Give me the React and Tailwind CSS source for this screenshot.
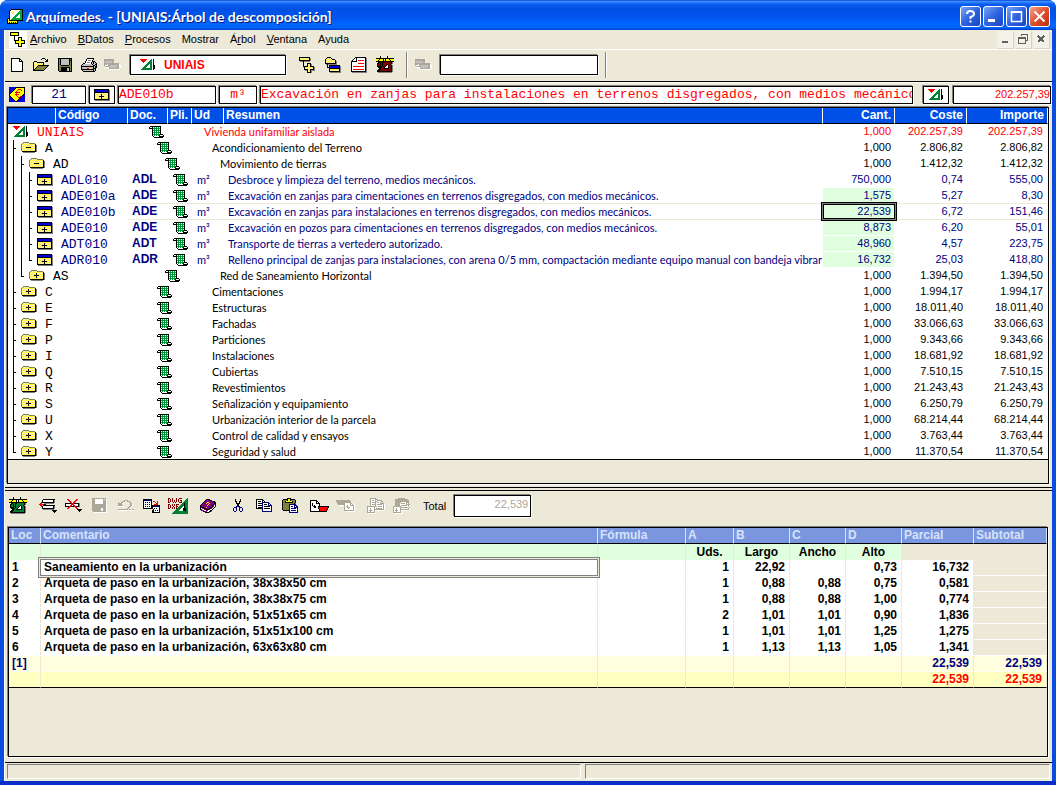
import React from "react";

const PALETTE = {
  k: "#000000",
  s: "#808080",
  w: "#ffffff",
  r: "#ff0000",
  g: "#008030",
  G: "#00a83c",
  b: "#0000e0",
  n: "#000080",
  Y: "#ffff00",
  d: "#aca899",
  m: "#800000",
  p: "#800080",
  o: "#808040",
  l: "#c0c0c0",
};

/* Icons are drawn on an even-sized box so that centring keeps them on whole pixels. */
function Pix({ map, even = true }) {
  const rects = [];
  map.forEach((row, y) => {
    for (let x = 0; x < row.length; x++) {
      const c = row[x];
      if (c === ".") continue;
      if (c === "y") {
        rects.push(<rect key={x + "-" + y} x={x} y={y} width="1" height="1" fill={(x + y) % 2 ? "#ffe83c" : "#fff8b8"} />);
        continue;
      }
      let e = x;
      while (e + 1 < row.length && row[e + 1] === c) e++;
      rects.push(<rect key={x + "-" + y} x={x} y={y} width={e - x + 1} height="1" fill={PALETTE[c]} />);
      x = e;
    }
  });
  const round = (n) => (even ? n + (n % 2) : n);
  const w = round(Math.max(...map.map((r) => r.length)));
  const h = round(map.length);
  return (
    <svg width={w} height={h} viewBox={`0 0 ${w} ${h}`} shapeRendering="crispEdges" aria-hidden="true" className="block shrink-0">
      {rects}
    </svg>
  );
}

const SHEET = [
  "kkkkkkkkkkkkkkk.",
  "kbbbbbbbbbbbbbks",
  "kbbbbbbbbbbbbbks",
  "kkkkkkkkkkkkkkks",
  "kyyyyyyyyyyyyyks",
  "kyyyyyykyyyyyyks",
  "kyyyyyykyyyyyyks",
  "kyyyykkkkkyyyyks",
  "kyyyyyykyyyyyyks",
  "kyyyyyykyyyyyyks",
  "kkkkkkkkkkkkkkks",
  ".sssssssssssssss",
];
const FOLDER_PLUS = [
  "..oooooo........",
  ".oyyyyyyoooooo..",
  "oyyyyyyyyyyyyyk.",
  "oyyyyyykyyyyyyks",
  "oyyyyyykyyyyyyks",
  "oyyyykkkkkyyyyks",
  "oyyyyyykyyyyyyks",
  "oyyyyyykyyyyyyks",
  "oyyyyyyyyyyyyyks",
  ".kkkkkkkkkkkkkks",
  "..ssssssssssss..",
];
const FOLDER_MINUS = FOLDER_PLUS.map((r, i) => (i === 3 || i === 4 || i === 6 || i === 7 ? "oyyyyyyyyyyyyyks" : r));
const SCROLL = [
  "...............",
  "...............",
  ".kkkkkkkkkkk...",
  "kwwkwGwGwGwk...",
  "kkkkGgGgGgGk...",
  "...kwGwGwGwk...",
  "...kGgGgGgGk...",
  "...kwGwGwGwk...",
  "...kGgGgGgGk...",
  "...kwGwGwGwk...",
  "...kGgGgGgGkkk.",
  "...kwGwGwGkwwwk",
  "....kwwwwwkkkkk",
  ".....kkkkkkkkk.",
];
const PROJECT = [
  "rrrrrrr....g.k.",
  ".rrrrr....gg.k.",
  "..rrr....ggg.k.",
  "...r....gggg.k.",
  ".......ggggg.k.",
  "......gggwgg.k.",
  ".....gggwwgg.kk",
  "....gggwwwgg.kk",
  "...gggwwwwgg.kk",
  "..gggggggggg.kk",
  ".ggggggggggg.k.",
];
const APP = [
  "....kkkkkkkkkkkk",
  "...kwwwwwwwwwGGk",
  "..kwwywwwwwwGGGk",
  "..kwyyyywwwGGGGk",
  "..kwwyywwwGGGGGk",
  "..kwwwwwwGGGwGGk",
  "..kwwwwwGGGwwGGk",
  "..kwwwwGGGwwwGGk",
  "..kwwwGGGwwwwGGk",
  ".kkwwGGGGGGGGGGk",
  "kYkwGGGGGGGGGGGk",
  "kYkkkkkkkkkkkkkk",
  "kYYYYYYYYYk.....",
  "kYkYkYkYkYk.....",
  "kkkkkkkkkkk.....",
];
const TREE_ADD = [
  "kkkkkkkkkkk.....",
  "kyyyyyyyyyks....",
  "kyyyyyyyyyks....",
  "kkkkkkkkkkks....",
  ".ssskssssss.....",
  "....k...........",
  "....k...kkkk....",
  "....k...kyyks...",
  "....k...kyyks...",
  "....kkkkkyykkkk.",
  ".....kyyyyyyyyks",
  ".....kyyyyyyyyks",
  ".....kkkkyykkkks",
  "......sskyykssss",
  "........kyyks...",
  "........kkkks...",
];
const MDI = [
  "kkkkkkkkk.......",
  "kYYYYYYYk.......",
  "kYYYYYYYk.......",
  "kkkkkkkkk.......",
  "....k...........",
  "....k...kkkk....",
  "....k...kYYk....",
  "....k...kYYk....",
  "....kkkkkYYkkkk.",
  ".....kYYYYYYYYk.",
  ".....kYYYYYYYYk.",
  ".....kkkkYYkkkk.",
  "........kYYk....",
  "........kYYk....",
  "........kkkk....",
];
const TREE_ITEM = [
  "..kkkk..........",
  ".kyyyyk.........",
  "kyyyyyykkk......",
  "kyyyyyyyyyk.....",
  "kyyyyyyyyyks....",
  "kyyyyyyyyyks....",
  "kkkkkkkkkkks....",
  ".sksssssssss....",
  "..k.kkkkkkkkkkk.",
  "..k.kbbbbbbbbbks",
  "..kkkbbbbbbbbbks",
  "....kkkkkkkkkkks",
  "....kyyyyyyyyyks",
  "....kyyyyyyyyyks",
  "....kkkkkkkkkkks",
  ".....sssssssssss",
];
const REPORT = [
  "....kkkkkkkkkkk.",
  "...kwkwwwwwwwwks",
  "..kwwkwwwwwwwwks",
  ".kwwwkwrrrrrrwks",
  "kkkkkkwwwwwwwwks",
  "kwwwwwwwwwwwwwks",
  "kwwwwwwrrrrrrwks",
  "kwwwwwwwwwwwwwks",
  "kwwwwwwwwwwwwwks",
  "kwrrrrrrrrrrrwks",
  "kwwwwwwwwwwwwwks",
  "kwwwwwwwwwwwwwks",
  "kwrrrrrrrrrrrwks",
  "kwwwwwwwwwwwwwks",
  "kkkkkkkkkkkkkkks",
  ".sssssssssssssss",
];
const measure = (c) => [
  "....k......k......",
  "....k......k......",
  "kkkkkkkkkkkkkkkkkk",
  "YYYkYYYkwkYYYkYYYY",
  "YYkYYYYkYkYYYYkYYY",
  "kkkkkkkkkkkkkkkkkk",
  "..kkcckkcccccccks.",
  ".kkckckccccccccks.",
  ".kcckckcccckccks.",
  ".kcckckccckwkccks.",
  ".kkkkckcckwwkccks.",
  "..kkkkcckwwwkccks.",
  "...kkcckkkkkkccks.",
  "..kkkccccccccccks.",
  ".kkkcccccccccccks.",
  ".kkkkkkkkkkkkkkks.",
  "..ssssssssssssss..",
].map((r) => r.replace(/c/g, c));
const MEASURE_RED = measure("m");
const MEASURE_GREEN = measure("g");
const NEW = [
  "kkkkkkkkk...",
  "kwwwwwwwkk..",
  "kwwwwwwwkwk.",
  "kwwwwwwwkkkk",
  "kwwwwwwwwwwk",
  "kwwwwwwwwwwk",
  "kwwwwwwwwwwk",
  "kwwwwwwwwwwk",
  "kwwwwwwwwwwk",
  "kwwwwwwwwwwk",
  "kwwwwwwwwwwk",
  "kwwwwwwwwwwk",
  "kwwwwwwwwwwk",
  "kkkkkkkkkkkk",
];
const OPEN = [
  ".........kkk....",
  "........k...k.k.",
  ".............kk.",
  ".kkk........kkk.",
  "kyyykkkkkkk.....",
  "kyyyyyyyyyk.....",
  "kyyyyyyyyyk.....",
  "kyyyykkkkkkkkkkk",
  "kyyykoooooooook.",
  "kyykoooooooook..",
  "kykoooooooook...",
  "kkoooooooook....",
  "kkkkkkkkkkk.....",
];
const SAVE = [
  "kkkkkkkkkkkkkk",
  "kokllllllllkok",
  "kokllllllllkkk",
  "kokllllllllkok",
  "kokllllllllkok",
  "kokllllllllkok",
  "kokllllllllkok",
  "kookkkkkkkkook",
  "kooooooooooook",
  "kookkkkkkkkkok",
  "kookkkkkkllkok",
  "kookkkkkkllkok",
  "kookkkkkkllkok",
  ".kkkkkkkkkkkkk",
];
const SAVE_OFF = [
  "dddddddddddddd.",
  "dddwwwwwwwwdwdw",
  "dddwwwwwwwwdddw",
  "dddwwwwwwwwdddw",
  "dddwwwwwwwwdddw",
  "dddwwwwwwwwdddw",
  "ddddddddddddddw",
  "ddddddddddddddw",
  "ddddddddddddddw",
  "ddddddddddddddw",
  "dddddddddwwdddw",
  "dddddddddwwdddw",
  "dddddddddwwdddw",
  ".dddddddddddddw",
  "..wwwwwwwwwwwww",
];
const PRINT = [
  "......kkkkkkk...",
  ".....kwwwwwwk...",
  ".....kwssswk....",
  "....kwwwwwwkkk..",
  "....kwssswklklk.",
  "..kkwwwwwwklkllk",
  ".klllllllllkllkk",
  "klllllllllllkklk",
  "kkkkkkkkkkkkklkk",
  "klllllllllllklkk",
  "klllllrrYYllkkk.",
  "kkkkkkkkkkkkklk.",
  ".kllllllllllklk.",
  "..kkkkkkkkkkkk..",
];
const LINKS_OFF = [
  "dddddddddd.......",
  "dddddddddd.......",
  "dllllllldd.......",
  "dlllllllddw......",
  "ddddddddddddddd..",
  "ddd.dddddddddddw.",
  "dwwwddlllllllddww",
  ".ddddllllllllddww",
  ".wwwwdllllllldd.w",
  "....wddddddddddw.",
  ".....wwwwwwwwwww.",
];
const EURO = [
  "bbbbbbbkkkkkkkkk",
  "bbbbbbkYYYYYYYYk",
  "bbbbbkYYYrrrYYwk",
  "bbbbkYYYrYYYrYYk",
  "bbbkYYYrYYYYYYYk",
  "bbkYYYrrrrrYYYYk",
  "bkYYYYYrYYYYYYYk",
  "kYYYYYrrrrYYYYkb",
  "kYYYYYYrYYYYYkbb",
  "bkYYYYYYrYYrkbbb",
  "bbkYYYYYYrrkbbbb",
  "bbbkYYYYYYkbbbbb",
  "bbbbkYYYYkbbbbbb",
  "bbbbbkYYkbbbbbbb",
  "bbbbbbkkbbbbbbbb",
];
const INSERT = [
  "....kkkkkkkkkkkk..",
  "...kwwwwwwwwwwks..",
  "...kwwwwwwwwwwks..",
  "..rkkkkkkkkkkkks..",
  ".rr..ssssssssss...",
  "rrrrrkk...........",
  ".rr.kkkkkkkkkkkk..",
  "..rkwwwwwwwwwwks..",
  "...kwwwwwwwwwwks..",
  "...kkkkkkkkkkkks..",
  "....sssssssssss...",
  ".............kkkkk",
  "..............kkk.",
  "...............k..",
];
const REMOVE = [
  "..rr.......rr....",
  "...rr.....rr.....",
  "....rr...rr......",
  ".....rr.rr.......",
  "kkkkkkrrrkkkkks..",
  "kwwwwwrrrwwwwks..",
  "kwwwwrrwrrwwwks..",
  "kkkkrrkkkrrkkks..",
  "...rr.....rr.....",
  "..rr.......rr....",
  "............kkkkk",
  ".............kkk.",
  "..............k..",
];
const UNDO_OFF = [
  "......dddd......",
  "....dddwwddd....",
  "d..ddw....wdd...",
  "ddddw......wdd..",
  "dddd........ddw.",
  "ddddd.......ddw.",
  ".wwwww.....ddw..",
  "..........ddw...",
  ".........ddw....",
  "dddddddddd.dd.dd",
  "wwwwwwwwwwwwwwww",
];
const CALC = [
  "kkkkkkkkk........",
  "knnnnnnnk........",
  "kwwwwwwwk.rr..r..",
  "kwkwkwkwk...r.r..",
  "kwwwwwwwk....rr..",
  "kwkwkwkwk..rrrr..",
  "kwwwwwwwkkkkkkkkk",
  "kwkwkwkwkknnnnnnk",
  "kwwwwwwwkkwwwwwwk",
  "kkkkkkkkkkwkwkwwk",
  "..........kwwwwwk",
  ".........kkwkwkwk",
  ".........kkwwwwwk",
  ".........kkkkkkkk",
];
const DXF = [
  "mm..m...m..mmm.....g",
  "m.m.m...m.m.......gg",
  "m.m.m.m.m.m.mm...ggg",
  "m.m.m.m.m.m..m..gggg",
  "mm...m.m...mmm.ggggg",
  "..............ggkggg",
  "mm..m.m.mmm..gggkggg",
  "m.m.m.m.m...ggggkggg",
  "m.m..m..mm.ggggwkggg",
  "m.m.m.m.m.ggggwwkggg",
  "mm..m.m.mggggwwkkkgg",
  "........ggggwwwkkkgg",
  ".......ggggwwwwkkkgg",
  "......gggggggggggggg",
  ".....ggggggggggggggg",
  "....gggggggggggggggg",
];
const BOOK = [
  "......kkkk......",
  ".....kppppkk....",
  "....kppppppppkk.",
  "...kpppYYpppppkk",
  "..kpppYppYppppkk",
  ".kppppppYppppkpk",
  "kppppppYppppkpwk",
  "kkppppppppppkpwk",
  "kpkkppYpppkkpwk.",
  "kwppkkpppkkpwk..",
  "kpwwppkkkpwwk...",
  ".kppwwppwwkk....",
  "...kkppwwkks....",
  ".....kkkks......",
];
const CUT = [
  "..k....k..",
  "..k....k..",
  "..kk..kk..",
  "...k..k...",
  "...kkkk...",
  "....kk....",
  "....kk....",
  "...nnnn...",
  ".nnn..nnn.",
  "n..n..n..n",
  "n..n..n..n",
  "n..n..n..n",
  ".nn....nn.",
];
const COPY = [
  "kkkkkkk.........",
  "kwwwwwkk........",
  "kwkkkwkwk.......",
  "kwwwwwnnnnnnn...",
  "kwkkkknwwwwwnn..",
  "kwwwwwnwkkkwnwn.",
  "kwkkkknwwwwwnnnn",
  "kwwwwwnwkkkkkkwn",
  "kwkkkknwwwwwwwwn",
  "kkkkkknwkkkkkkwn",
  "......nwwwwwwwwn",
  "......nwwwwwwwwn",
  "......nnnnnnnnnn",
];
const PASTE = [
  ".....kkkk.......",
  ".kkkkkYYkkkkk...",
  "kooookYYkooook..",
  "kookYYYYYYkook..",
  "kookkkkkkkkook..",
  "koooooooooooks..",
  "koooooonnnnnnn..",
  "koooooonwwwwnnn.",
  "koooooonwnnwnwnn",
  "koooooonwwwwnnnn",
  "koooooonwnnnnnwn",
  "koooooonwwwwwwwn",
  ".kkkkkknwnnnnnwn",
  ".......nwwwwwwwn",
  ".......nnnnnnnnn",
];
const TO_BIN = [
  "kkkkkkk............",
  "kwwwwwkk...........",
  "kwwwwwkwk..........",
  "kwkwwwkkkk.........",
  "kwkwwwwwwk.........",
  "kwkwkwwwwk.........",
  "kwwkkkwwkkkkkkkkkkk",
  "kwwwkkwwkrrrrrrrrrk",
  "kwwwwwwwkrrrrrrrrk.",
  "kwwwwwwwwkrrrrrrrk.",
  "kwwwwwwwwkrrrrrrk..",
  "kkkkkkkkkkkkkkkkk..",
];
const FROM_BIN_OFF = [
  "dddddddddddddd.....",
  "ddddddddddddddd....",
  ".ddddddddddddddw...",
  ".ddddddddwwwwwddw..",
  "..dddddddwwwwwdwdw.",
  "...wwwwwdwwdwwddddw",
  "........dwddwwwwwdw",
  "........dwwdddwwwdw",
  "........dwwwdwwwwdw",
  "........dwwwwwwwwdw",
  "........ddddddddddw",
  ".........wwwwwwwwww",
];
const COPY_OFF = [
  "...dddddd.........",
  "...dwwwwddd.......",
  "...dwddwdwddddd...",
  "...dwwwwddwwwwdd..",
  "...dwddddwddwdwd..",
  "...dwwwwdwwwwdddd.",
  "...dwddddwdddddwdw",
  "...dwwwwdwwwwwwwdw",
  "ddddddddddwddddwdw",
  "dwwwwwwdwwwwwwwwdw",
  "dwwdwwwdwddddddwdw",
  "dwwdwwwddddddddddw",
  "dwdddwwdwwwwwwwww.",
  "dwwdwwwdw.........",
  "ddddddddw.........",
  ".wwwwwwww.........",
];
const PASTE_OFF = [
  ".....ddddddd.....",
  "..ddddddddddddd..",
  "..dddddddddddddd.",
  "..dddddddddddddd.",
  "..ddddddwwwwwddd.",
  "..dddddwddddwdwd.",
  "..dddddwwwwwwdddd",
  "..dddddwddddddwdw",
  "ddddddddwwwwwwwdw",
  "dwwwwwwddddddddwd",
  "dwwdwwwdwwwwwwwdw",
  "dwwdwwwdddddddddw",
  "dwdddwwdwwwwwwww.",
  "dwwdwwwdw........",
  "ddddddddw........",
  ".wwwwwwww........",
];

const LATO = "font-[Lato,'Liberation_Sans',sans-serif]";
const ARIAL = "font-['Liberation_Sans',Arial,sans-serif]";
const MONO = "font-['Liberation_Mono','Courier_New',monospace]";
const BOX = "border border-black bg-white shadow-[-1px_-1px_0_#808080,1px_1px_0_#ffffff]";

function IconButton({ map, label, disabled, narrow }) {
  return (
    <button type="button" aria-label={label} disabled={disabled} className={"flex h-6 shrink-0 items-center justify-center " + (narrow ? "w-6" : "w-[26px]")}>
      <Pix map={map} />
    </button>
  );
}

const Separator = () => <span className="h-[26px] w-0.5 shrink-0 border-r border-l border-r-white border-l-[#808080]" />;

function CaptionButton({ label, close, children }) {
  return (
    <button
      type="button"
      aria-label={label}
      className={
        "flex size-[21px] items-center justify-center rounded-[3px] border border-white " +
        (close ? "bg-linear-to-br from-[#f0a088] via-[#e0502e] to-[#b83010]" : "bg-linear-to-br from-[#7ba4f5] via-[#2f63e0] to-[#1a44c0]")
      }
    >
      <svg width="19" height="19" viewBox="0 0 19 19" fill="none" stroke="#fff" strokeWidth="2" aria-hidden="true">
        {children}
      </svg>
    </button>
  );
}

function MdiButton({ label, children }) {
  return (
    <button type="button" aria-label={label} className="flex h-[17px] w-4 items-start justify-center bg-[#f3f1e8] shadow-[1px_1px_0_#d8d4c4]">
      <svg width="16" height="16" viewBox="0 0 16 16" fill="none" stroke="#606060" shapeRendering="crispEdges" aria-hidden="true">
        {children}
      </svg>
    </button>
  );
}

const MENUS = [
  ["", "A", "rchivo"],
  ["", "B", "Datos"],
  ["", "P", "rocesos"],
  ["Mostrar", "", ""],
  ["Á", "r", "bol"],
  ["", "V", "entana"],
  ["Ayuda", "", ""],
];

/* level, guides, code, doc, unit, summary, quantity, cost, amount */
const TREE = [
  [0, "", "UNIAIS", "", "", "Vivienda unifamiliar aislada", "1,000", "202.257,39", "202.257,39"],
  [1, "t", "A", "", "", "Acondicionamiento del Terreno", "1,000", "2.806,82", "2.806,82", true],
  [2, "bt", "AD", "", "", "Movimiento de tierras", "1,000", "1.412,32", "1.412,32", true],
  [3, "bbt", "ADL010", "ADL", "m²", "Desbroce y limpieza del terreno, medios mecánicos.", "750,000", "0,74", "555,00"],
  [3, "bbt", "ADE010a", "ADE", "m³", "Excavación en zanjas para cimentaciones en terrenos disgregados, con medios mecánicos.", "1,575", "5,27", "8,30"],
  [3, "bbt", "ADE010b", "ADE", "m³", "Excavación en zanjas para instalaciones en terrenos disgregados, con medios mecánicos.", "22,539", "6,72", "151,46"],
  [3, "bbt", "ADE010", "ADE", "m³", "Excavación en pozos para cimentaciones en terrenos disgregados, con medios mecánicos.", "8,873", "6,20", "55,01"],
  [3, "bbt", "ADT010", "ADT", "m³", "Transporte de tierras a vertedero autorizado.", "48,960", "4,57", "223,75"],
  [3, "bbe", "ADR010", "ADR", "m³", "Relleno principal de zanjas para instalaciones, con arena 0/5 mm, compactación mediante equipo manual con bandeja vibrar", "16,732", "25,03", "418,80"],
  [2, "be", "AS", "", "", "Red de Saneamiento Horizontal", "1,000", "1.394,50", "1.394,50"],
  [1, "t", "C", "", "", "Cimentaciones", "1,000", "1.994,17", "1.994,17"],
  [1, "t", "E", "", "", "Estructuras", "1,000", "18.011,40", "18.011,40"],
  [1, "t", "F", "", "", "Fachadas", "1,000", "33.066,63", "33.066,63"],
  [1, "t", "P", "", "", "Particiones", "1,000", "9.343,66", "9.343,66"],
  [1, "t", "I", "", "", "Instalaciones", "1,000", "18.681,92", "18.681,92"],
  [1, "t", "Q", "", "", "Cubiertas", "1,000", "7.510,15", "7.510,15"],
  [1, "t", "R", "", "", "Revestimientos", "1,000", "21.243,43", "21.243,43"],
  [1, "t", "S", "", "", "Señalización y equipamiento", "1,000", "6.250,79", "6.250,79"],
  [1, "t", "U", "", "", "Urbanización interior de la parcela", "1,000", "68.214,44", "68.214,44"],
  [1, "t", "X", "", "", "Control de calidad y ensayos", "1,000", "3.763,44", "3.763,44"],
  [1, "e", "Y", "", "", "Seguridad y salud", "1,000", "11.370,54", "11.370,54"],
];

const DOC_WIDTH = ["w-[17px]", "w-[25px]", "w-[33px]", "w-[41px]"];
const UNIT_WIDTH = ["w-[7px]", "w-[15px]", "w-[23px]", "w-[31px]"];
const LEVEL_COLOR = ["text-[#ff0000]", "text-black", "text-black", "text-[#000080]"];

function Guide({ kind }) {
  return (
    <svg width="8" height="16" viewBox="0 0 8 16" stroke="#000" shapeRendering="crispEdges" aria-hidden="true" className="shrink-0">
      <path d={kind === "b" ? "M.5 0V16" : kind === "t" ? "M.5 0V16M0 8.5H3" : "M.5 0V9M0 8.5H3"} />
    </svg>
  );
}

function TreeRow({ row, last }) {
  const [level, guides, code, doc, unit, summary, qty, cost, amount, open] = row;
  const selected = code === "ADE010b";
  const line = last ? "border-b border-black" : selected || code === "ADE010a" ? "border-b border-[#ece9d8]" : "border-b border-white";
  const green = level === 3 && code !== "ADL010";
  const icon = level === 0 ? PROJECT : level === 3 ? SHEET : open ? FOLDER_MINUS : FOLDER_PLUS;
  return (
    <tr className={"h-4 " + LEVEL_COLOR[level]}>
      <td colSpan={2} className={"p-0 " + (last ? line : "")}>
        <div className={"flex h-4 items-center pl-[5px] " + (last ? "-mb-px" : "")}>
          {guides.split("").map((g, i) => (
            <Guide key={i} kind={g} />
          ))}
          <span className="flex w-6 shrink-0">
            <Pix map={icon} />
          </span>
          <span className={"text-[13px] " + MONO}>{code}</span>
        </div>
      </td>
      <td colSpan={2} className={"p-0 " + line}>
        <div className="flex h-[15px] items-start pl-1">
          <b className={"shrink-0 text-xs leading-[15px] " + DOC_WIDTH[level]}>{doc}</b>
          <Pix map={SCROLL} />
        </div>
      </td>
      <td colSpan={2} className={"p-0 " + line}>
        <div className={"flex h-[15px] items-center overflow-hidden pl-[5px] whitespace-nowrap " + LATO}>
          <span className={"shrink-0 " + UNIT_WIDTH[level]}>{unit}</span>
          <span>{summary}</span>
        </div>
      </td>
      <td className={"p-0 text-right " + line}>
        <div
          className={
            "flex h-[15px] items-center justify-end " +
            (selected
              ? "relative z-10 border border-black bg-[#dfffdf] pr-[3px] shadow-[0_0_0_1px_#808080,0_0_0_2px_#000000]"
              : green
                ? "mr-px bg-[#dfffdf] pr-[3px]"
                : "pr-1")
          }
        >
          {qty}
        </div>
      </td>
      <td className={"p-0 pr-1 text-right " + line}>{cost}</td>
      <td className={"p-0 pr-[5px] text-right " + line}>{amount}</td>
    </tr>
  );
}

const HEADS = ["", "Código", "Doc.", "Pli.", "Ud", "Resumen", "Cant.", "Coste", "Importe"];

function TreeTable() {
  return (
    <div className="border border-black bg-[#ece9d8] pb-[23px] shadow-[-1px_-1px_0_#808080,1px_1px_0_#ffffff]">
      <table className="w-full table-fixed border-separate border-spacing-0 bg-white text-[11px] leading-[15px]">
        <colgroup>
          <col className="w-12" />
          <col className="w-[72px]" />
          <col className="w-10" />
          <col className="w-6" />
          <col className="w-8" />
          <col />
          <col className="w-[72px]" />
          <col className="w-[72px]" />
          <col className="w-[81px]" />
        </colgroup>
        <thead>
          <tr className="h-4 bg-[#0050e8] text-xs leading-[15px] text-white">
            {HEADS.map((h, i) => (
              <th key={i} scope="col" className={"border-r border-b border-r-white border-b-black py-0 pr-[3px] pl-0.5 font-bold whitespace-nowrap " + (i > 5 ? "text-right" : "text-left")}>
                {h}
              </th>
            ))}
          </tr>
        </thead>
        <tbody>
          {TREE.map((r, i) => (
            <TreeRow key={r[2]} row={r} last={i === TREE.length - 1} />
          ))}
        </tbody>
      </table>
    </div>
  );
}

const LINES = [
  ["1", "Saneamiento en la urbanización", "", "1", "22,92", "", "0,73", "16,732", ""],
  ["2", "Arqueta de paso en la urbanización, 38x38x50 cm", "", "1", "0,88", "0,88", "0,75", "0,581", ""],
  ["3", "Arqueta de paso en la urbanización, 38x38x75 cm", "", "1", "0,88", "0,88", "1,00", "0,774", ""],
  ["4", "Arqueta de paso en la urbanización, 51x51x65 cm", "", "2", "1,01", "1,01", "0,90", "1,836", ""],
  ["5", "Arqueta de paso en la urbanización, 51x51x100 cm", "", "1", "1,01", "1,01", "1,25", "1,275", ""],
  ["6", "Arqueta de paso en la urbanización, 63x63x80 cm", "", "1", "1,13", "1,13", "1,05", "1,341", ""],
  ["[1]", "", "", "", "", "", "", "22,539", "22,539"],
  ["", "", "", "", "", "", "", "22,539", "22,539"],
];
const LINE_HEADS = ["Loc", "Comentario", "Fórmula", "A", "B", "C", "D", "Parcial", "Subtotal"];
const UNIT_HEADS = ["", "", "", "Uds.", "Largo", "Ancho", "Alto", "", ""];

function LinesTable() {
  return (
    <div className="flex-1 border border-black bg-[#ece9d8] shadow-[-1px_-1px_0_#808080,1px_1px_0_#ffffff]">
      <table className="w-full table-fixed border-separate border-spacing-0 text-xs leading-[15px] font-bold">
        <colgroup>
          <col className="w-8" />
          <col />
          <col className="w-22" />
          <col className="w-12" />
          <col className="w-14" />
          <col className="w-14" />
          <col className="w-14" />
          <col className="w-[72px]" />
          <col className="w-[73px]" />
        </colgroup>
        <thead>
          <tr className="h-4 bg-[#7a96df] text-[#d6e2fa]">
            {LINE_HEADS.map((h) => (
              <th key={h} scope="col" className="border-r border-b border-r-[#d6e2fa] border-b-black px-0.5 py-0 text-left">
                {h}
              </th>
            ))}
          </tr>
        </thead>
        <tbody>
          <tr className="h-4">
            {UNIT_HEADS.map((h, i) => (
              <td key={i} className={"border-r border-[#ece9d8] p-0 text-center " + (i > 6 ? "" : "bg-[#dfffdf]")}>
                {h}
              </td>
            ))}
          </tr>
          {LINES.map((r, y) => (
            <tr key={y} className={"h-4 " + (y === 6 ? "bg-[#ffffdf] text-[#000080]" : y === 7 ? "bg-[#ffffbf] text-[#ff0000]" : "bg-white text-black")}>
              {r.map((c, x) => (
                <td
                  key={x}
                  className={
                    "border-r border-b p-0 border-r-[#ece9d8] " +
                    (y === 6 ? "border-b-[#fffff0] " : y === 7 ? "border-b-black " : "border-b-white ") +
                    (x === 8 && y < 6 ? "bg-[#ece9d8]" : "")
                  }
                >
                  <div
                    className={
                      "h-[15px] whitespace-nowrap " +
                      (x < 3 ? "pl-[3px]" : "pr-1 text-right") +
                      (x === 1 && y === 0 ? " relative z-10 shadow-[0_0_0_1px_#808080,0_0_0_2px_#ece9d8,0_0_0_3px_#808080]" : "")
                    }
                  >
                    {c}
                  </div>
                </td>
              ))}
            </tr>
          ))}
        </tbody>
      </table>
    </div>
  );
}

export default function App() {
  return (
    <div className={"flex min-h-screen flex-col rounded-t-lg border-b-4 border-[#0a2fc8] bg-[#0a4be0] text-[11px] text-black " + ARIAL}>
      <header className="flex h-[30px] shrink-0 items-center rounded-t-lg bg-[linear-gradient(180deg,#0a3fd0_0%,#3a90ff_5%,#0a5cf0_14%,#0050e4_30%,#0056ee_60%,#0066ff_80%,#0064fa_92%,#003cc8_100%)] pt-[3px] pr-1.5 pl-[7px]">
        <Pix map={APP} even={false} />
        <h1 className="min-w-0 flex-1 truncate pl-[3px] font-[Lato,'Open_Sans',sans-serif] text-sm font-bold text-white [text-shadow:1px_1px_0_#0a1883]">
          Arquímedes. - [UNIAIS:Árbol de descomposición]
        </h1>
        <div className="flex gap-0.5">
          <CaptionButton label="Ayuda">
            <path d="M6 7Q6 4 9.500 4T13 7Q13 9 9.500 10V12M9.500 13.500V15.500" />
          </CaptionButton>
          <CaptionButton label="Minimizar">
            <path d="M4 13.500H11" strokeWidth="3" />
          </CaptionButton>
          <CaptionButton label="Maximizar">
            <path d="M4 5H15M4.500 4V14.500H14.500V4" strokeWidth="1.500" />
            <path d="M4 5H15" />
          </CaptionButton>
          <CaptionButton label="Cerrar" close>
            <path d="M4.500 4.500L14.500 14.500M14.500 4.500L4.500 14.500" />
          </CaptionButton>
        </div>
      </header>

      <main className="mx-1 flex flex-1 flex-col border-l border-white bg-[#ece9d8]">
        <nav className="flex h-5 shrink-0 items-center border-b border-white pr-[3px] pl-1">
          <span className="bg-white px-px pt-px">
            <Pix map={MDI} />
          </span>
          <ul className="flex flex-1 gap-[11px] pl-[3px]">
            {MENUS.map(([a, u, b]) => (
              <li key={a + u + b}>
                <button type="button">
                  {a}
                  <u>{u}</u>
                  {b}
                </button>
              </li>
            ))}
          </ul>
          <div className="flex gap-0.5">
            <MdiButton label="Minimizar documento">
              <path d="M5 11H11" strokeWidth="2" />
            </MdiButton>
            <MdiButton label="Restaurar documento">
              <path d="M6 4.500V3.500H12.500V9.500H11M3.500 6.500H10.500V12.500H3.500ZM3 7.500H10" />
            </MdiButton>
            <MdiButton label="Cerrar documento">
              <path d="M5 5L11 11M11 5L5 11" strokeWidth="2" />
            </MdiButton>
          </div>
        </nav>

        <div className="flex h-8 shrink-0 items-center border-b border-black pt-px pb-0.5">
          <div className="flex pr-[5px]">
            <IconButton narrow map={NEW} label="Nuevo" />
            <IconButton narrow map={OPEN} label="Abrir" />
            <IconButton narrow map={SAVE} label="Guardar" />
            <IconButton narrow map={PRINT} label="Imprimir" />
            <IconButton narrow map={LINKS_OFF} label="Ventanas" disabled />
          </div>
          <button type="button" className={"mr-2 flex h-5 w-[156px] items-center gap-2 pl-[9px] text-xs font-bold text-[#ff0000] " + BOX}>
            <Pix map={PROJECT} />
            UNIAIS
          </button>
          <div className="flex pr-2">
            <IconButton map={TREE_ADD} label="Insertar capítulo" />
            <IconButton map={TREE_ITEM} label="Insertar partida" />
            <IconButton map={REPORT} label="Informe" />
            <IconButton map={MEASURE_RED} label="Mediciones" />
          </div>
          <Separator />
          <div className="flex px-[3px]">
            <IconButton map={LINKS_OFF} label="Vincular" disabled />
          </div>
          <input aria-label="Buscar" className={"mr-[7px] h-5 w-[158px] px-1 " + BOX} />
          <Separator />
        </div>

        <div className="flex h-[25px] shrink-0 items-center border-t border-white pr-px pl-1">
          <button type="button" aria-label="Precios" className="mr-[7px] shrink-0">
            <Pix map={EURO} />
          </button>
          <input aria-label="Número" defaultValue="21" className={"mr-[3px] h-[18px] w-[54px] shrink-0 text-center text-[13px] text-[#000080] " + MONO + " " + BOX} />
          <button type="button" aria-label="Tipo de concepto" className={"mr-[3px] flex h-[18px] w-[26px] shrink-0 items-center justify-center " + BOX}>
            <Pix map={SHEET} />
          </button>
          <input aria-label="Código" defaultValue="ADE010b" className={"mr-[3px] h-[18px] w-[98px] shrink-0 text-[13px] text-[#ff0000] " + MONO + " " + BOX} />
          <input aria-label="Unidad" defaultValue="m³" className={"mr-[3px] h-[18px] w-[38px] shrink-0 text-center text-[13px] text-[#ff0000] " + MONO + " " + BOX} />
          <input
            aria-label="Resumen"
            defaultValue="Excavación en zanjas para instalaciones en terrenos disgregados, con medios mecánicos."
            className={"mr-2.5 h-[18px] min-w-0 flex-1 text-[13px] text-[#ff0000] " + MONO + " " + BOX}
          />
          <button type="button" aria-label="Obra" className={"mr-1 flex h-[18px] w-[26px] shrink-0 items-center justify-center " + BOX}>
            <Pix map={PROJECT} />
          </button>
          <input aria-label="Importe total" defaultValue="202.257,39" className={"h-[18px] w-[98px] shrink-0 pb-0.5 text-right text-[#ff0000] " + BOX} />
        </div>

        <section className="border-b border-black pr-[3px] pb-[3px] pl-0.5">
          <TreeTable />
        </section>

        <section className="mt-0.5 flex flex-1 flex-col border-t border-black pr-1 pb-[5px] pl-[3px]">
          <div className="flex h-9 shrink-0 items-center pb-[6px] pl-px">
            <div className="flex pr-1">
              <button type="button" aria-label="Mediciones de la partida" className="flex h-6 w-[22px] shrink-0 items-center">
                <Pix map={MEASURE_GREEN} />
              </button>
            </div>
            <div className="flex pr-1">
              <IconButton map={INSERT} label="Insertar línea" />
              <IconButton map={REMOVE} label="Borrar línea" />
              <IconButton map={SAVE_OFF} label="Guardar línea" disabled />
              <IconButton map={UNDO_OFF} label="Deshacer" disabled />
              <IconButton map={CALC} label="Calcular" />
              <IconButton map={DXF} label="DWG DXF" />
            </div>
            <div className="flex pr-1">
              <IconButton map={BOOK} label="Manual" />
            </div>
            <div className="flex pr-1">
              <IconButton map={CUT} label="Cortar" />
              <IconButton map={COPY} label="Copiar" />
              <IconButton map={PASTE} label="Pegar" />
            </div>
            <div className="flex pr-1">
              <IconButton map={TO_BIN} label="Enviar al recogedor" />
              <IconButton map={FROM_BIN_OFF} label="Traer del recogedor" disabled />
            </div>
            <div className="flex pr-2">
              <IconButton map={COPY_OFF} label="Copiar texto" disabled />
              <IconButton map={PASTE_OFF} label="Pegar texto" disabled />
            </div>
            <label htmlFor="total" className="pr-2">
              Total
            </label>
            <input id="total" readOnly defaultValue="22,539" className={"h-[22px] w-[77px] pr-0.5 pb-1 text-right text-[#aca899] " + BOX} />
          </div>
          <LinesTable />
        </section>

        <footer className="flex h-[19px] shrink-0 gap-1 border-t border-black px-0.5 pt-px pb-0.5">
          <div className="w-[55%] border border-t-[#808080] border-r-white border-b-white border-l-[#808080]" />
          <div className="flex-1 border border-t-[#808080] border-r-white border-b-white border-l-[#808080]" />
        </footer>
      </main>
    </div>
  );
}
